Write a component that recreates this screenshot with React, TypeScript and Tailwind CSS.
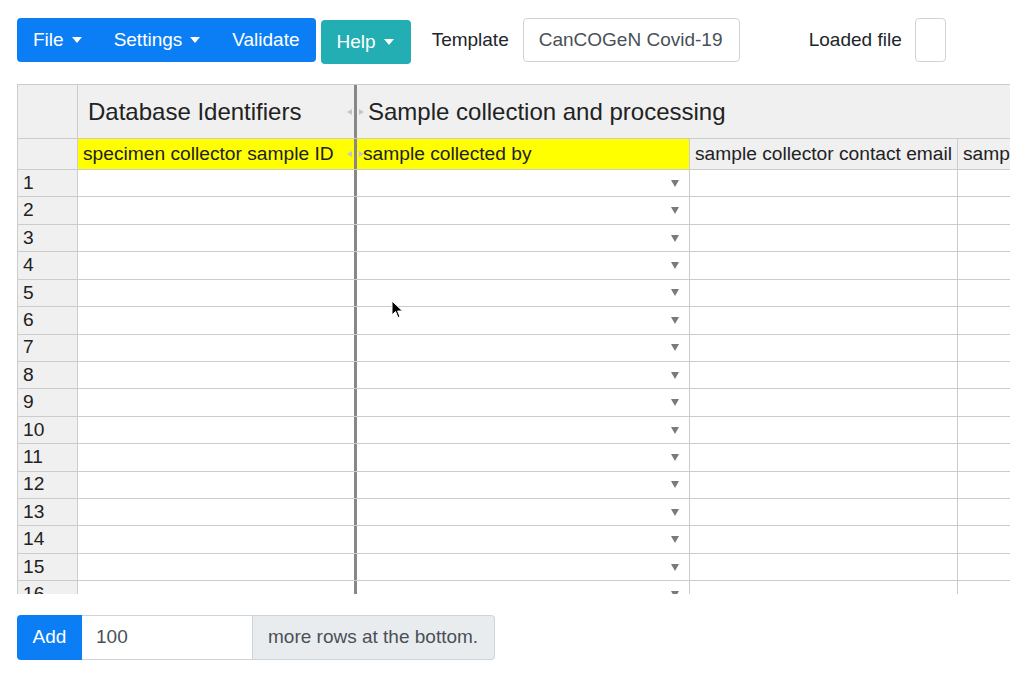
import React from "react";

const Caret = () => (
  <span className="ml-[8px] inline-block w-0 h-0 border-l-[5px] border-r-[5px] border-t-[6px] border-l-transparent border-r-transparent border-t-white translate-y-[-1px]" />
);

const DropArrow = () => (
  <span className="inline-block w-0 h-0 border-l-[4px] border-r-[4px] border-t-[7px] border-l-transparent border-r-transparent border-t-[#7a7a7a]" />
);

const HandleLeft = () => (
  <span className="absolute right-[2px] top-1/2 -translate-y-1/2 w-0 h-0 border-t-[3px] border-b-[3px] border-r-[5px] border-t-transparent border-b-transparent border-r-[#c4c4c4]" />
);
const HandleRight = () => (
  <span className="absolute left-[2px] top-1/2 -translate-y-1/2 w-0 h-0 border-t-[3px] border-b-[3px] border-l-[5px] border-t-transparent border-b-transparent border-l-[#c4c4c4]" />
);

export default function App() {
  const rows = Array.from({ length: 16 }, (_, i) => i + 1);
  return (
    <div className="relative min-h-[679px] bg-white font-['Liberation_Sans',Arial,sans-serif] text-[#212529]">
      {/* toolbar */}
      <div className="pl-[17px] pt-[18px] flex items-start h-[62px]">
        <div className="flex h-[44px] pt-[1px] bg-[#0b7ef5] rounded-[4px] text-white text-[19px]">
          <div className="flex items-center px-4">File<Caret /></div>
          <div className="flex items-center px-4">Settings<Caret /></div>
          <div className="flex items-center px-4">Validate</div>
        </div>
        <div className="ml-[5px] mt-[2px] pt-[1px] flex items-center h-[44px] pl-4 pr-[17px] bg-[#22aeb2] rounded-[4px] text-white text-[19px]">
          Help<Caret />
        </div>
        <div className="ml-[21px] pt-[1px] h-[44px] flex items-center text-[19px]">Template</div>
        <div className="ml-[14px] pt-[1px] h-[44px] w-[217px] flex items-center px-[15px] border border-[#ced4da] rounded-[4px] text-[#495057] text-[19px]">
          CanCOGeN Covid-19
        </div>
        <div className="ml-[69px] pt-[1px] h-[44px] flex items-center text-[19px]">Loaded file</div>
        <div className="ml-[13px] h-[44px] w-[31px] border border-[#ced4da] rounded-[4px]" />
      </div>

      {/* grid */}
      <div className="ml-[17px] mt-[22px] w-[993px] h-[510px] overflow-hidden border-l border-t border-[#cccccc] text-[#222] text-[19.2px]">
        <div className="w-[1300px]">
          {/* header row 1 */}
          <div className="flex h-[54px] border-b border-[#cccccc] bg-[#f0f0f0]">
            <div className="w-[60px] shrink-0 border-r border-[#cccccc]" />
            <div className="relative w-[279px] shrink-0 border-r-[3px] border-[#888888] flex items-center pl-[10px] text-[24px]">
              Database Identifiers
              <HandleLeft />
            </div>
            <div className="relative flex-1 flex items-center pl-[11px] text-[24px]">
              Sample collection and processing
              <HandleRight />
            </div>
          </div>
          {/* header row 2 */}
          <div className="flex h-[31px] border-b border-[#cccccc]">
            <div className="w-[60px] shrink-0 border-r border-[#cccccc] bg-[#f0f0f0]" />
            <div className="relative w-[279px] shrink-0 border-r-[3px] border-[#888888] bg-[#ffff00] flex items-center pl-[5px] whitespace-nowrap">
              specimen collector sample ID
              <HandleLeft />
            </div>
            <div className="relative w-[333px] shrink-0 border-r border-[#cccccc] bg-[#ffff00] flex items-center pl-[6px] whitespace-nowrap">
              sample collected by
              <HandleRight />
            </div>
            <div className="w-[268px] shrink-0 border-r border-[#cccccc] bg-[#f0f0f0] flex items-center pl-[5px] whitespace-nowrap">
              sample collector contact email
            </div>
            <div className="w-[300px] shrink-0 border-r border-[#cccccc] bg-[#f0f0f0] flex items-center pl-[5px] whitespace-nowrap">
              sample collector contact address
            </div>
          </div>
          {/* body rows */}
          {rows.map((r) => (
            <div key={r} className="flex h-[27.43px] border-b border-[#cccccc]">
              <div className="w-[60px] shrink-0 border-r border-[#cccccc] bg-[#f0f0f0] flex items-center pl-[5px]">
                {r}
              </div>
              <div className="w-[279px] shrink-0 border-r-[3px] border-[#888888]" />
              <div className="w-[333px] shrink-0 border-r border-[#cccccc] flex items-center justify-end pr-[10px]">
                <DropArrow />
              </div>
              <div className="w-[268px] shrink-0 border-r border-[#cccccc]" />
              <div className="w-[300px] shrink-0 border-r border-[#cccccc]" />
            </div>
          ))}
        </div>
      </div>

      {/* add rows */}
      <div className="ml-[17px] mt-[21px] flex h-[45px] text-[19px]">
        <div className="w-[65px] flex items-center justify-center bg-[#0b7ef5] text-white rounded-l-[4px]">Add</div>
        <div className="w-[171px] flex items-center pl-[14px] border-y border-r border-[#ced4da] text-[#495057]">100</div>
        <div className="w-[242px] flex items-center pl-[15px] bg-[#e9ecef] border-y border-r border-[#ced4da] rounded-r-[4px] text-[#495057]">
          more rows at the bottom.
        </div>
      </div>

      {/* mouse cursor */}
      <svg className="absolute left-[391px] top-[300px]" width="13" height="20" viewBox="0 0 13 20">
        <path d="M1 1 L1 15 L4.5 11.5 L7 17.5 L9 16.7 L6.6 11 L11.5 11 Z" fill="#000" stroke="#fff" strokeWidth="1" />
      </svg>
    </div>
  );
}
